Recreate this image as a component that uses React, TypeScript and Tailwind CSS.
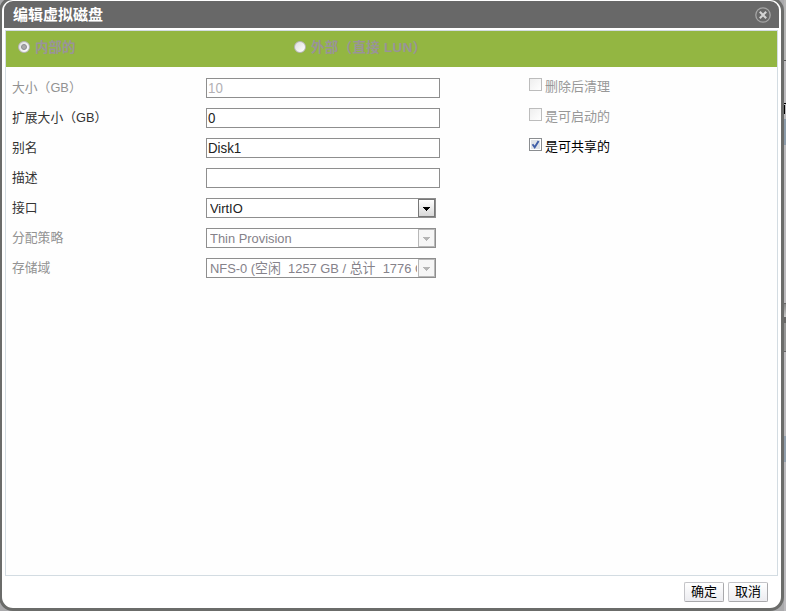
import type { ReactNode } from "react";

const sans = "font-['Liberation_Sans','Noto_Sans_CJK_SC',sans-serif]";
const cjk = "font-['Noto_Sans_CJK_SC',sans-serif]";

function Row({ label, muted, children }: { label: ReactNode; muted?: boolean; children: ReactNode }) {
  return (
    <div className="flex h-[30px] items-start">
      <div className={`w-[195px] shrink-0 pl-px text-[12.8px] leading-[19px] whitespace-nowrap ${muted ? "text-[#929292]" : "text-[#333]"}`}>
        {label}
      </div>
      {children}
    </div>
  );
}

function Input({ value, muted }: { value: string; muted?: boolean }) {
  return (
    <div className={`h-5 w-[234px] border border-[#8e8e8e] bg-white pl-[1px] text-[14px] leading-[19px] ${muted ? "text-[#b2b0b4]" : "text-[#222]"}`}>
      <span className="inline-block origin-left scale-x-[0.95]">{value}</span>
    </div>
  );
}

function Select({ children, muted }: { children: ReactNode; muted?: boolean }) {
  return (
    <div className={`flex h-5 w-[230px] border border-[#8e8e8e] bg-white ${muted ? "text-[#85828a]" : "text-[#222]"}`}>
      <div className="w-[210px] shrink-0 overflow-hidden pl-[3px] text-[13.5px] leading-[19px] whitespace-pre">
        <span className="inline-block origin-left scale-x-[0.955]">{children}</span>
      </div>
      <div className={`ml-auto flex w-[17px] shrink-0 items-center justify-center border ${muted ? "border-[#b8b8b8] bg-[#f6f6f6]" : "border-[#777] bg-linear-to-b from-white to-[#d8d8d8]"}`}>
        <svg width="7" height="4" viewBox="0 0 7 4" shapeRendering="crispEdges" className="mt-px">
          <path d="M0 0h7v1H6v1H5v1H4v1H3V3H2V2H1V1H0z" fill={muted ? "#b5b5b5" : "#000"} />
        </svg>
      </div>
    </div>
  );
}

function Check({ label, checked }: { label: string; checked?: boolean }) {
  return (
    <div className="flex h-[30px] items-start">
      <span className={`block h-[13px] w-[13px] border p-px ${checked ? "border-[#8a8d90] bg-white" : "border-[#bcbcbc] bg-linear-to-br from-[#eee] to-white"}`}>
        {checked && (
          <svg width="9" height="9" viewBox="0 0 9 9" className="block bg-[#dfe3e8]">
            <path d="M1.5 4.2 3.7 7.2 7.6 1" fill="none" stroke="#405fa8" strokeWidth="1.9" />
          </svg>
        )}
      </span>
      <span className={`ml-[3px] text-[13px] leading-[17px] ${checked ? "text-black" : "text-[#989898]"}`}>{label}</span>
    </div>
  );
}

function Radio({ selected }: { selected?: boolean }) {
  return (
    <span className="flex h-3 w-3 items-center justify-center rounded-full border border-[#b6b4b9] bg-linear-to-br from-[#ddd] to-white">
      {selected && <span className="h-[6px] w-[6px] rounded-full border border-[#8c8c91] bg-[#aaa]" />}
    </span>
  );
}

function Button({ children }: { children: ReactNode }) {
  return (
    <button className="h-5 w-10 rounded-[2px] border border-[#c4c4c8] border-r-[#a9a9ac] border-b-[#a9a9ac] bg-linear-to-b from-white to-[#ececf0] pb-px text-[13px] leading-[16px] text-black">
      {children}
    </button>
  );
}

export default function App() {
  return (
    <div className={`flex h-[611px] w-[786px] overflow-hidden bg-[#aaaaac] ${sans}`}>
      <div className="-mt-[3px] -ml-px flex h-[614px] w-[785px] shrink-0 flex-col rounded-[14px] border-[3px] border-[#6b6c6a] bg-white px-[2px] pt-px">
        <header className="flex h-[27px] shrink-0 items-start justify-between rounded-t-[9px] bg-[#686868] pl-[9px] text-white">
          <h1 className={`text-[15px] leading-[25px] font-bold ${cjk}`}>编辑虚拟磁盘</h1>
          <svg width="16" height="16" viewBox="0 0 16 16" className="mt-[6px] mr-2" fill="none">
            <circle cx="8" cy="8" r="7.2" stroke="#a5a5a5" strokeWidth="1.3" />
            <path d="m4.8 4.8 6.4 6.4m0-6.4-6.4 6.4" stroke="#d4d4d4" strokeWidth="2.1" />
          </svg>
        </header>
        <main className="mx-px mt-[2px] h-[546px] shrink-0 border border-[#d3dce2] bg-[#fefefe]">
          <div className="flex h-9 bg-[#93b642] text-[13.5px] font-bold text-[#999399]">
            <div className="flex h-8 w-[288px] items-center gap-[5px] pl-3">
              <Radio selected />
              <span className="mt-[3px]">内部的</span>
            </div>
            <div className="flex h-8 items-center gap-[5px]">
              <Radio />
              <span className="mt-[3px] tracking-[0.3px] whitespace-nowrap">外部（直接 LUN）</span>
            </div>
          </div>
          <div className="flex pt-[11px] pl-[5px]">
            <div className="w-[518px]">
              <Row label="大小（GB）" muted><Input value="10" muted /></Row>
              <Row label="扩展大小（GB）"><Input value="0" /></Row>
              <Row label="别名"><Input value="Disk1" /></Row>
              <Row label="描述"><Input value="" /></Row>
              <Row label="接口"><Select>VirtIO</Select></Row>
              <Row label="分配策略" muted><Select muted>Thin Provision</Select></Row>
              <Row label="存储域" muted><Select muted>{"NFS-0 (空闲  1257 GB / 总计  1776 G"}</Select></Row>
            </div>
            <div>
              <Check label="删除后清理" />
              <Check label="是可启动的" />
              <Check label="是可共享的" checked />
            </div>
          </div>
        </main>
        <footer className="flex justify-end gap-1 pt-[6px] pr-[11px]">
          <Button>确定</Button>
          <Button>取消</Button>
        </footer>
      </div>
      <div className="flex w-[2px] shrink-0 flex-col bg-[#bbbabd]">
        <div className="h-[60px] bg-[#b5b5b5]" />
        <div className="h-px bg-[#555]" />
        <div className="h-[42px]" />
        <div className="h-px bg-black" />
        <div className="h-px" />
        <div className="h-[9px] w-px bg-black" />
        <div className="h-[5px]" />
        <div className="h-[26px] bg-[#8d9cab]" />
        <div className="h-[158px]" />
        <div className="h-px bg-[#666]" />
        <div className="h-[13px] bg-linear-to-b from-[#888] to-[#c8c8c8]" />
        <div className="h-[6px] bg-[#696969]" />
        <div className="h-7 bg-[#979797]" />
        <div className="h-px bg-[#666]" />
        <div className="h-[84px]" />
        <div className="h-[26px] bg-[#929fad]" />
      </div>
    </div>
  );
}
